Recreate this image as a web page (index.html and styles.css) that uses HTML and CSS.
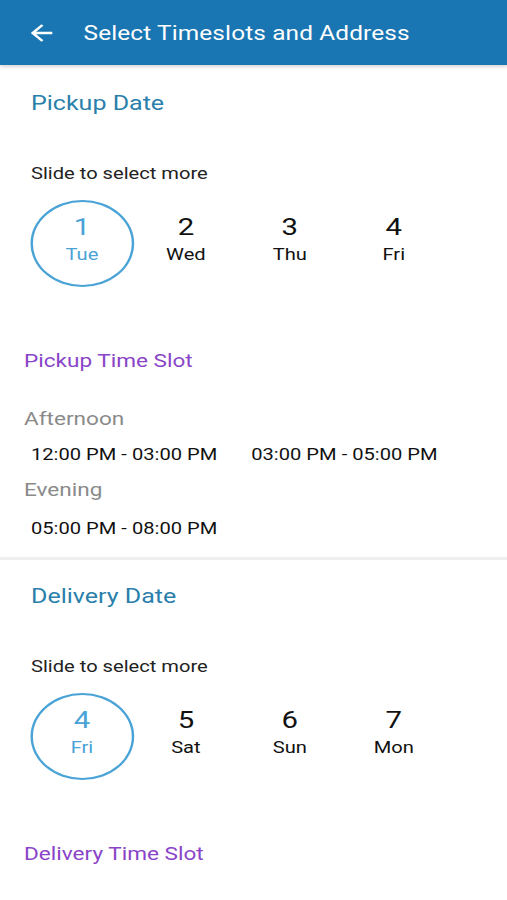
FILE: index.html
```html
<!DOCTYPE html>
<html>
<head>
<meta charset="utf-8">
<link rel="stylesheet" href="styles.css">
</head>
<body>
<div class="page">
<header class="appbar">
  <svg class="back" width="18" height="18" viewBox="0 0 18 18"><path d="M17 9H2.5M9 1.8L1.8 9L9 16.2" fill="none" stroke="#fff" stroke-width="2.3" stroke-linecap="square"/></svg>
  <h1 class="title">Select Timeslots and Address</h1>
</header>

<section class="block">
  <h2 class="date-title">Pickup Date</h2>
  <p class="hint">Slide to select more</p>
  <div class="dates">
    <div class="day selected"><span class="num">1</span><span class="dow">Tue</span></div>
    <div class="day"><span class="num">2</span><span class="dow">Wed</span></div>
    <div class="day"><span class="num">3</span><span class="dow">Thu</span></div>
    <div class="day"><span class="num">4</span><span class="dow">Fri</span></div>
  </div>
  <h2 class="slot-title">Pickup Time Slot</h2>
  <div class="period">Afternoon</div>
  <div class="slots">
    <span class="slot">12:00 PM - 03:00 PM</span>
    <span class="slot">03:00 PM - 05:00 PM</span>
  </div>
  <div class="period second">Evening</div>
  <div class="slots last">
    <span class="slot">05:00 PM - 08:00 PM</span>
  </div>
</section>

<div class="divider"></div>

<section class="block delivery">
  <h2 class="date-title">Delivery Date</h2>
  <p class="hint">Slide to select more</p>
  <div class="dates">
    <div class="day selected"><span class="num">4</span><span class="dow">Fri</span></div>
    <div class="day"><span class="num">5</span><span class="dow">Sat</span></div>
    <div class="day"><span class="num">6</span><span class="dow">Sun</span></div>
    <div class="day"><span class="num">7</span><span class="dow">Mon</span></div>
  </div>
  <h2 class="slot-title">Delivery Time Slot</h2>
</section>
</div>
</body>
</html>
```

FILE: styles.css
```css
* { box-sizing: border-box; }
html, body { margin: 0; padding: 0; background: #fff; }
body {
  font-family: Roboto, "Noto Sans", sans-serif;
  color: #1a1a1a;
  width: 507px;
  height: 900px;
  overflow: hidden;
}
.page {
  width: 415.6px;
  transform: scaleX(1.22);
  transform-origin: 0 0;
}
.appbar {
  height: 65px;
  background: #1976b2;
  display: flex;
  align-items: center;
  padding-left: 24.5px;
  box-shadow: 0 2px 3px rgba(0,0,0,0.16);
  position: relative;
}
.back { margin-right: 26px; margin-top: 0; }
.title {
  margin: 0;
  color: #fff;
  font-size: 20px;
  font-weight: 400;
  letter-spacing: 0.1px;
}
.date-title {
  margin: 0;
  padding: 25px 0 0 25.4px;
  font-size: 20.5px;
  font-weight: 400;
  color: #2a7fab;
  line-height: 26px;
}
.delivery .date-title { padding-top: 23px; }
.hint {
  margin: 0;
  padding: 48px 0 0 25.4px;
  font-size: 16.5px;
  line-height: 20px;
  color: #222;
}
.dates {
  display: flex;
  padding: 16px 0 0 24.6px;
}
.day {
  width: 85.2px;
  height: 87px;
  display: flex;
  flex-direction: column;
  align-items: center;
  padding-top: 11px;
  color: #111;
  border: 2.3px solid transparent;
  border-radius: 50%;
}
.day.selected {
  border-color: #4aa3d6;
  color: #4aa3d6;
}
.num { font-size: 24px; line-height: 28px; }
.dow { font-size: 16.5px; line-height: 22px; margin-top: 3px; }
.slot-title {
  margin: 0;
  padding: 62px 0 0 19.7px;
  font-size: 18.5px;
  font-weight: 400;
  line-height: 24px;
  color: #8a44c8;
}
.period {
  padding: 35px 0 0 19.7px;
  font-size: 18.5px;
  line-height: 22px;
  color: #8a8a8a;
}
.period.second { padding-top: 14px; }
.slots {
  display: flex;
  gap: 27.8px;
  padding: 15px 0 0 25.4px;
  font-size: 16.5px;
  line-height: 20px;
  color: #111;
}
.slots.last { padding-top: 18px; }
.divider {
  height: 3px;
  background: #efefef;
  margin-top: 18px;
}
```
